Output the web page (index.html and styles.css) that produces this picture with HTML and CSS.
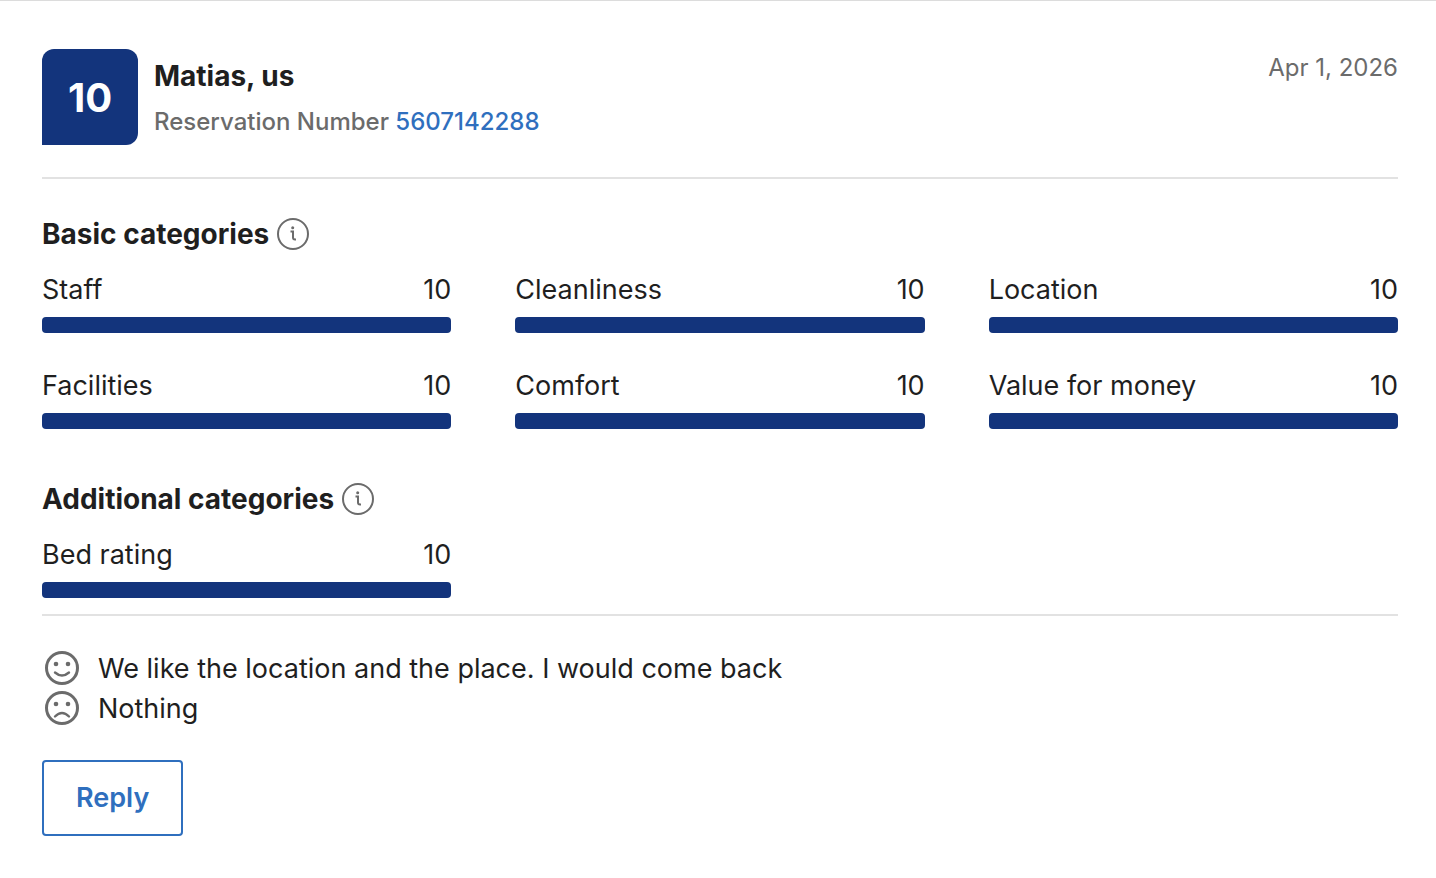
FILE: index.html
```html
<!DOCTYPE html>
<html lang="en">
<head>
    <meta charset="UTF-8">
    <meta name="viewport" content="width=device-width, initial-scale=1.0">
    <title>Guest review</title>
    <link rel="stylesheet" href="styles.css">
</head>
<body>
    <article class="review">
        <header class="review-header">
            <div class="score">10</div>
            <div class="guest">
                <h2>Matias, us</h2>
                <p>Reservation Number <a href="#">5607142288</a></p>
            </div>
            <time class="date" datetime="2026-04-01">Apr 1, 2026</time>
        </header>

        <section class="categories">
            <h3>Basic categories
                <svg class="info" viewBox="0 0 32 32" aria-hidden="true">
                    <circle cx="16" cy="16" r="15"/>
                    <path d="M13.500 13.500H16v6q0 2 2 2h1"/>
                    <circle class="dot" cx="15.700" cy="9.700" r="1.500"/>
                </svg>
            </h3>
            <div class="grid">
                <div class="category">
                    <span>Staff</span><span>10</span>
                    <div class="bar"><div class="fill" style="width: 100%"></div></div>
                </div>
                <div class="category">
                    <span>Cleanliness</span><span>10</span>
                    <div class="bar"><div class="fill" style="width: 100%"></div></div>
                </div>
                <div class="category">
                    <span>Location</span><span>10</span>
                    <div class="bar"><div class="fill" style="width: 100%"></div></div>
                </div>
                <div class="category">
                    <span>Facilities</span><span>10</span>
                    <div class="bar"><div class="fill" style="width: 100%"></div></div>
                </div>
                <div class="category">
                    <span>Comfort</span><span>10</span>
                    <div class="bar"><div class="fill" style="width: 100%"></div></div>
                </div>
                <div class="category">
                    <span>Value for money</span><span>10</span>
                    <div class="bar"><div class="fill" style="width: 100%"></div></div>
                </div>
            </div>
        </section>

        <section class="categories additional">
            <h3>Additional categories
                <svg class="info" viewBox="0 0 32 32" aria-hidden="true">
                    <circle cx="16" cy="16" r="15"/>
                    <path d="M13.500 13.500H16v6q0 2 2 2h1"/>
                    <circle class="dot" cx="15.700" cy="9.700" r="1.500"/>
                </svg>
            </h3>
            <div class="grid">
                <div class="category">
                    <span>Bed rating</span><span>10</span>
                    <div class="bar"><div class="fill" style="width: 100%"></div></div>
                </div>
            </div>
        </section>

        <section class="comments">
            <p>
                <svg class="face" viewBox="0 1 40 40" aria-hidden="true">
                    <circle cx="20" cy="20" r="15.500"/>
                    <circle class="dot" cx="14" cy="16" r="2.300"/>
                    <circle class="dot" cx="26" cy="16" r="2.300"/>
                    <path class="mouth" d="M13 24.500q7 6 14 0"/>
                </svg>
                We like the location and the place. I would come back
            </p>
            <p>
                <svg class="face" viewBox="0 1 40 40" aria-hidden="true">
                    <circle cx="20" cy="20" r="15.500"/>
                    <circle class="dot" cx="14" cy="16" r="2.300"/>
                    <circle class="dot" cx="26" cy="16" r="2.300"/>
                    <path class="mouth" d="M13 28.500q7-7 14 0"/>
                </svg>
                Nothing
            </p>
        </section>

        <button type="button" class="reply">Reply</button>
    </article>
</body>
</html>
```

FILE: styles.css
```css
* {
    box-sizing: border-box;
}
body {
    margin: 0;
    background: #fff;
    color: #1f1f1f;
    font-family: Inter, Arial, sans-serif;
    font-size: 27px;
    line-height: 40px;
}
h2, h3, p {
    margin: 0;
    font-size: inherit;
}
h2, h3 {
    font-size: 28px;
    font-weight: 700;
}
.review {
    border-top: 1px solid #dcdcdc;
    padding: 48px 38px 42px 42px;
}
.review-header {
    display: flex;
    align-items: flex-start;
    gap: 16px;
    padding-bottom: 32px;
    border-bottom: 2px solid #e2e2e2;
}
.score {
    width: 96px;
    height: 96px;
    border-radius: 12px 12px 12px 0;
    background: #13347c;
    color: #fff;
    font-size: 40px;
    font-weight: 700;
    line-height: 98px;
    text-align: center;
}
.guest {
    display: grid;
    gap: 6px;
    padding-top: 7px;
}
.guest p, .date {
    color: #6b6b6b;
    font-size: 24px;
}
.guest p {
    font-weight: 500;
}
.guest a {
    color: #2f6fbe;
    text-decoration: none;
}
.date {
    margin-left: auto;
    line-height: 38px;
}
.categories {
    padding-top: 35px;
}
.categories h3 {
    display: flex;
    align-items: center;
    gap: 8px;
    margin-bottom: 16px;
}
.info {
    width: 32px;
    height: 32px;
    fill: none;
    stroke: #6b6b6b;
    stroke-width: 2;
}
.dot {
    fill: #6b6b6b;
    stroke: none;
}
.grid {
    display: grid;
    grid-template-columns: repeat(3, 1fr);
    gap: 33px 64px;
}
.category {
    display: flex;
    flex-wrap: wrap;
    justify-content: space-between;
    row-gap: 7px;
}
.bar {
    width: 100%;
    height: 16px;
    border-radius: 4px;
    background: #e7e7e7;
    overflow: hidden;
}
.fill {
    height: 100%;
    background: #13347c;
}
.additional {
    padding-top: 50px;
    padding-bottom: 16px;
    border-bottom: 2px solid #e2e2e2;
}
.comments {
    padding: 33px 0 31px;
}
.comments p {
    display: flex;
    gap: 16px;
}
.face {
    flex: none;
    width: 40px;
    height: 40px;
    fill: none;
    stroke: #6b6b6b;
    stroke-width: 3;
    overflow: visible;
}
.mouth {
    stroke-linecap: round;
    stroke-width: 2.4;
}
.reply {
    height: 76px;
    padding: 0 32px;
    border: 2px solid #2f6fbe;
    border-radius: 4px;
    background: #fff;
    color: #2f6fbe;
    font: inherit;
    font-weight: 600;
    cursor: pointer;
}
```
